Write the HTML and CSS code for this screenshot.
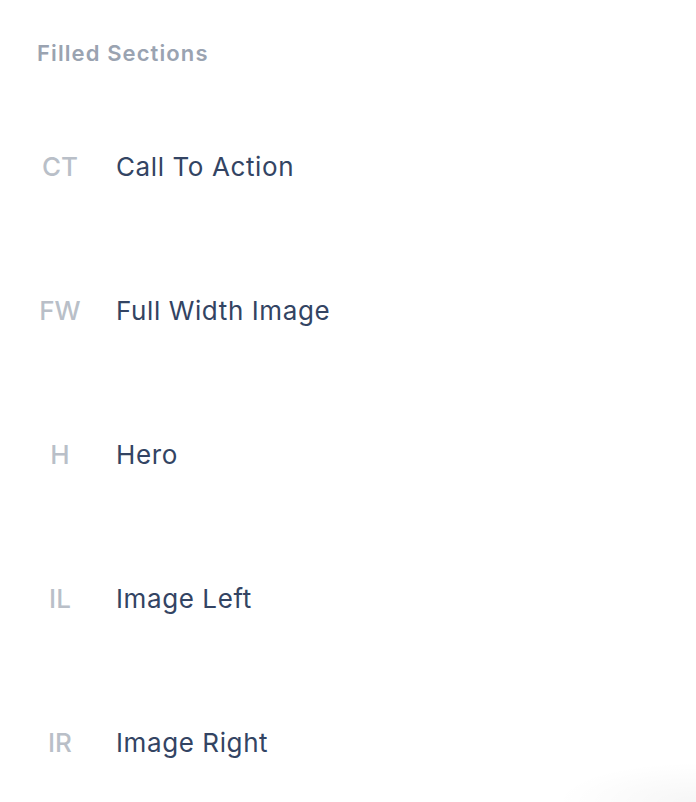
FILE: index.html
```html
<!DOCTYPE html>
<html lang="en">
<head>
<meta charset="utf-8">
<title>Filled Sections</title>
<link rel="stylesheet" href="styles.css">
</head>
<body>
<div class="panel">
  <h2 class="heading">Filled Sections</h2>
  <ul class="list">
    <li class="item"><span class="abbr">CT</span><span class="label">Call To Action</span></li>
    <li class="item"><span class="abbr">FW</span><span class="label">Full Width Image</span></li>
    <li class="item"><span class="abbr">H</span><span class="label">Hero</span></li>
    <li class="item"><span class="abbr">IL</span><span class="label">Image Left</span></li>
    <li class="item"><span class="abbr">IR</span><span class="label">Image Right</span></li>
  </ul>
</div>
</body>
</html>
```
FILE: styles.css
```css
html, body {
  margin: 0;
  padding: 0;
  background: #ffffff;
}
body {
  font-family: Inter, "Noto Sans", sans-serif;
  width: 696px;
  height: 802px;
  overflow: hidden;
  position: relative;
}
body::after {
  content: "";
  position: absolute;
  right: 0;
  bottom: 0;
  width: 200px;
  height: 60px;
  background: radial-gradient(ellipse 140px 40px at 100% 100%, rgba(0,0,0,0.035) 0%, rgba(0,0,0,0) 100%);
  pointer-events: none;
}
.panel {
  padding: 38px 0 0 37px;
}
.heading {
  margin: 0;
  font-size: 22px;
  line-height: 30px;
  font-weight: 600;
  letter-spacing: 1.1px;
  color: #9aa3b1;
}
.list {
  list-style: none;
  margin: 80px 0 0 0;
  padding: 0;
  display: flex;
  flex-direction: column;
  gap: 108px;
}
.item {
  display: flex;
  align-items: center;
  height: 36px;
}
.abbr {
  width: 46px;
  text-align: center;
  font-size: 26px;
  font-weight: 500;
  color: #b9bfc8;
  margin-right: 33px;
}
.label {
  font-size: 26px;
  font-weight: 400;
  letter-spacing: 0.6px;
  color: #334463;
}
```
